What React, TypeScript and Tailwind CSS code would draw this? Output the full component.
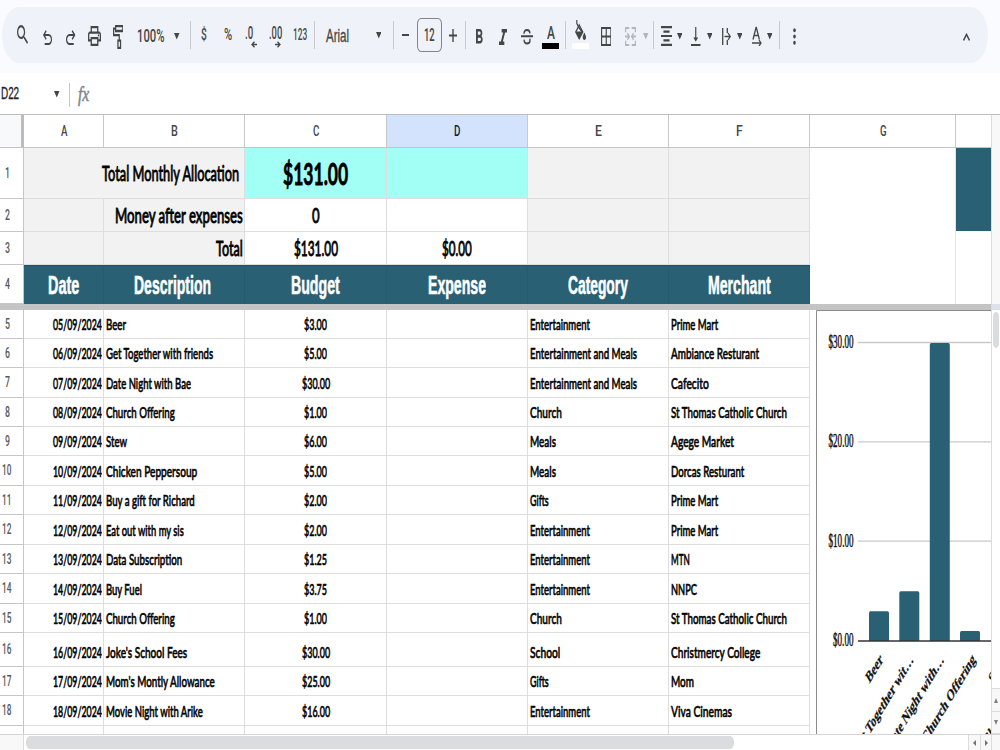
import { useLayoutEffect, useRef, useState, type ReactNode } from "react";
import {
  MdSearch, MdOutlinePrint, MdFormatBold, MdFormatItalic,
  MdBorderAll, MdFormatAlignCenter, MdVerticalAlignBottom,
} from "react-icons/md";

type Row = {
  n: number;
  h: string;
  date: string;
  desc: [string, number];
  amount: string;
  cat: [string, number];
  shop: [string, number];
};

const rows: Row[] = [
  { n: 5, h: "h-[29px]", date: "05/09/2024", desc: ["Beer", 20], amount: "$3.00", cat: ["Entertainment", 60], shop: ["Prime Mart", 47] },
  { n: 6, h: "h-[29px]", date: "06/09/2024", desc: ["Get Together with friends", 107], amount: "$5.00", cat: ["Entertainment and Meals", 107], shop: ["Ambiance Resturant", 88] },
  { n: 7, h: "h-[30px]", date: "07/09/2024", desc: ["Date Night with Bae", 85], amount: "$30.00", cat: ["Entertainment and Meals", 107], shop: ["Cafecito", 38] },
  { n: 8, h: "h-[29px]", date: "08/09/2024", desc: ["Church Offering", 69], amount: "$1.00", cat: ["Church", 32], shop: ["St Thomas Catholic Church", 116] },
  { n: 9, h: "h-[29px]", date: "09/09/2024", desc: ["Stew", 21], amount: "$6.00", cat: ["Meals", 26], shop: ["Agege Market", 63] },
  { n: 10, h: "h-[30px]", date: "10/09/2024", desc: ["Chicken Peppersoup", 91], amount: "$5.00", cat: ["Meals", 26], shop: ["Dorcas Resturant", 73] },
  { n: 11, h: "h-[29px]", date: "11/09/2024", desc: ["Buy a gift for Richard", 89], amount: "$2.00", cat: ["Gifts", 19], shop: ["Prime Mart", 47] },
  { n: 12, h: "h-[30px]", date: "12/09/2024", desc: ["Eat out with my sis", 78], amount: "$2.00", cat: ["Entertainment", 60], shop: ["Prime Mart", 47] },
  { n: 13, h: "h-[29px]", date: "13/09/2024", desc: ["Data Subscription", 76], amount: "$1.25", cat: ["Entertainment", 60], shop: ["MTN", 19] },
  { n: 14, h: "h-[30px]", date: "14/09/2024", desc: ["Buy Fuel", 36], amount: "$3.75", cat: ["Entertainment", 60], shop: ["NNPC", 26] },
  { n: 15, h: "h-[29px]", date: "15/09/2024", desc: ["Church Offering", 69], amount: "$1.00", cat: ["Church", 32], shop: ["St Thomas Catholic Church", 116] },
  { n: 16, h: "h-[34px]", date: "16/09/2024", desc: ["Joke's School Fees", 81], amount: "$30.00", cat: ["School", 30], shop: ["Christmercy College", 89] },
  { n: 17, h: "h-[29px]", date: "17/09/2024", desc: ["Mom's Montly Allowance", 109], amount: "$25.00", cat: ["Gifts", 19], shop: ["Mom", 23] },
  { n: 18, h: "h-[30px]", date: "18/09/2024", desc: ["Movie Night with Arike", 97], amount: "$16.00", cat: ["Entertainment", 60], shop: ["Viva Cinemas", 61] },
];

const columns: [string, string][] = [
  ["A", "w-20"],
  ["B", "w-[141px]"],
  ["C", "w-[142px]"],
  ["D", "w-[141px] bg-[#d3e3fd] text-[#041e49]"],
  ["E", "w-[141px]"],
  ["F", "w-[141px]"],
  ["G", "w-[146px]"],
];

const bars = [
  { x: 869, value: 3 },
  { x: 899.3, value: 5 },
  { x: 929.8, value: 30 },
  { x: 960, value: 1 },
];

const barLabels = [
  { x: 883.5, text: "Beer" },
  { x: 914, text: "Get Together wit…" },
  { x: 944.5, text: "Date Night with…" },
  { x: 976, text: "Church Offering" },
  { x: 1007, text: "Stew" },
  { x: 1039, text: "Chicken Peppe…" },
];

// Condenses a line of text horizontally to the given width
function Fit({ w, className = "", children }: { w: number; className?: string; children: ReactNode }) {
  const ref = useRef<HTMLSpanElement>(null);
  const [scale, setScale] = useState(1);

  useLayoutEffect(() => {
    if (ref.current) setScale(w / ref.current.offsetWidth);
  }, [w, children]);

  return (
    <span className={`inline-flex shrink-0 leading-none whitespace-nowrap ${className}`} style={{ width: w }}>
      <span ref={ref} className="inline-block shrink-0 origin-left" style={{ transform: `scaleX(${scale})` }}>
        {children}
      </span>
    </span>
  );
}

function Caret({ className = "" }: { className?: string }) {
  return (
    <svg viewBox="0 0 10 5" preserveAspectRatio="none" className={`h-[6.5px] w-[5.5px] shrink-0 ${className}`}>
      <path d="M0 0h10L5 5z" fill="currentColor" />
    </svg>
  );
}

function Divider({ className = "" }: { className?: string }) {
  return <div className={`mt-3.5 h-7 w-px shrink-0 bg-[#c7cacd] ${className}`} />;
}

function Toolbar() {
  return (
    <div className="h-[73px] bg-[#f9fbfe] pt-[7px] pl-[2px]">
      <div className="flex h-14 w-[986px] items-start rounded-[17px/28px] bg-[#eff3f9] font-['Roboto',sans-serif] text-[#444746]">
        <MdSearch viewBox="3 3 17.5 17.5" preserveAspectRatio="none" className="mt-[18px] ml-[15px] h-[19px] w-[11px] shrink-0" />
        <svg viewBox="160 -800 640 600" preserveAspectRatio="none" className="mt-[23px] ml-[15px] h-[15px] w-[9px] shrink-0">
          <path fill="currentColor" d="M280-200v-80h284q63 0 109.500-40T720-420q0-60-46.500-100T564-560H312l104 104-56 56-200-200 200-200 56 56-104 104h252q97 0 167 63t70 157q0 94-70 157t-167 63H280Z" />
        </svg>
        <svg viewBox="160 -800 640 600" preserveAspectRatio="none" className="mt-[23px] ml-[14px] h-[15px] w-[9.5px] shrink-0 -scale-x-100">
          <path fill="currentColor" d="M280-200v-80h284q63 0 109.500-40T720-420q0-60-46.500-100T564-560H312l104 104-56 56-200-200 200-200 56 56-104 104h252q97 0 167 63t70 157q0 94-70 157t-167 63H280Z" />
        </svg>
        <MdOutlinePrint viewBox="2 3 20 18" preserveAspectRatio="none" className="mt-[19px] ml-[12.5px] h-5 w-[13px] shrink-0" />
        <svg viewBox="0 0 16 20" preserveAspectRatio="none" className="mt-[18px] ml-[11.5px] h-6 w-[10.5px] shrink-0" fill="none" stroke="currentColor" strokeWidth="1.900">
          <path d="M4 1h11v4H4zM4 3H1v5.500h8.500V13M7.500 13h4v6h-4z" />
        </svg>
        <Fit w={27.5} className="mt-5 ml-[13.5px] text-lg">100%</Fit>
        <Caret className="mt-[26px] ml-[10px]" />
        <Divider className="ml-[10px]" />
        <Fit w={6} className="mt-[19px] ml-[10.5px] text-[17px] font-medium">$</Fit>
        <Fit w={8.5} className="mt-[19px] ml-[16.5px] text-[17px]">%</Fit>
        <div className="mt-[17px] ml-[13px] flex w-3 shrink-0 flex-col">
          <Fit w={8} className="text-[18px] font-medium">.0</Fit>
          <svg viewBox="0 0 6 7" className="-mt-px ml-[6px] h-[7px] w-1.5" fill="none" stroke="currentColor" strokeWidth="1.300">
            <path d="M6 3.500H1M3.500.7L1 3.500l2.500 2.800" />
          </svg>
        </div>
        <div className="mt-[17px] ml-[12px] flex w-3 shrink-0 flex-col">
          <Fit w={13} className="text-[18px] font-medium">.00</Fit>
          <svg viewBox="0 0 6 7" className="-mt-px ml-[6px] h-[7px] w-1.5" fill="none" stroke="currentColor" strokeWidth="1.300">
            <path d="M0 3.500h5M2.500.7L5 3.500 2.500 6.300" />
          </svg>
        </div>
        <Fit w={14} className="mt-5 ml-[11.500px] text-base">123</Fit>
        <Divider className="ml-[7.500px]" />
        <Fit w={23} className="mt-5 ml-[10.5px] font-['Liberation_Sans',sans-serif] text-lg font-normal [-webkit-text-stroke:0.3px]">Arial</Fit>
        <Caret className="mt-[25px] ml-[27px]" />
        <Divider className="ml-[11.500px]" />
        <div className="mt-[27px] ml-[8px] h-[2px] w-[7.500px] shrink-0 bg-[#444746]" />
        <div className="mt-[11px] ml-[7.500px] flex h-[34px] w-[25px] shrink-0 items-center justify-center rounded-[4px/6px] border border-[#80868b]">
          <Fit w={10.5} className="text-lg">12</Fit>
        </div>
        <svg viewBox="0 0 8 13" className="mt-[22px] ml-[7px] h-[13px] w-[8px] shrink-0" stroke="currentColor">
          <path d="M0 6.500h8" strokeWidth="2" />
          <path d="M4 0v13" strokeWidth="1.400" />
        </svg>
        <Divider className="ml-[8px]" />
        <MdFormatBold viewBox="7 4 10.500 14" preserveAspectRatio="none" className="mt-[22px] ml-[10.500px] h-[14.500px] w-[6.500px] shrink-0" />
        <MdFormatItalic viewBox="6 4 12 14" preserveAspectRatio="none" className="mt-[22px] ml-[16px] h-4 w-[8px] shrink-0" />
        <svg viewBox="0 0 18 16" preserveAspectRatio="none" className="mt-[22px] ml-[14px] h-[15.500px] w-[12px] shrink-0" fill="none" stroke="currentColor" strokeWidth="2">
          <path d="M0 7.500h18M4.500 5C4.500 2.500 6.500 1 9 1s4.300 1.300 4.500 3.500M4.500 11c.2 2.500 2 4 4.500 4s4.500-1.300 4.500-3.500c0-.6-.1-1-.3-1.500" />
        </svg>
        <div className="mt-[17px] ml-[9.500px] flex w-[17px] shrink-0 flex-col items-center">
          <Fit w={8} className="text-lg">A</Fit>
          <div className="mt-px h-[6px] w-[17px] bg-black" />
        </div>
        <Divider className="ml-[6px]" />
        <div className="mt-[13px] ml-[6px] flex w-[17px] shrink-0 flex-col items-center">
          <svg viewBox="0 0 17 20" preserveAspectRatio="none" className="h-[20px] w-[11px]">
            <path d="M2.800 0v3.500l3.700 4.500L12 12.500" fill="none" stroke="currentColor" strokeWidth="1.800" />
            <path d="M6.500 5L1.200 12l5.300 6.500L12 12z" fill="none" stroke="currentColor" strokeWidth="1.800" />
            <path d="M1 11.500h11L6.500 19z" fill="currentColor" />
            <path d="M14.500 12.500s2.500 2.800 2.500 4.800-1.100 2.700-2.500 2.700-2.500-1-2.500-2.700 2.500-4.800 2.500-4.800z" fill="currentColor" />
          </svg>
          <div className="mt-[3px] h-[6px] w-[17px] bg-white" />
        </div>
        <MdBorderAll viewBox="3 3 18 18" preserveAspectRatio="none" className="mt-5 ml-[11.500px] h-[19px] w-[10.500px] shrink-0" />
        <svg viewBox="0 0 18 18" preserveAspectRatio="none" className="mt-5 ml-[14px] h-[19px] w-[11px] shrink-0 text-[#b4b7ba]" fill="none" stroke="currentColor" strokeWidth="2">
          <path d="M1 5V1h6M11 1h6v4M1 13v4h6M11 17h6v-4M0 9h6M12 9h6M4 6l3 3-3 3M14 6l-3 3 3 3" />
        </svg>
        <Caret className="mt-[26px] ml-[7px] text-[#b4b7ba]" />
        <Divider className="ml-[4.500px]" />
        <MdFormatAlignCenter viewBox="3 3 18 18" preserveAspectRatio="none" className="mt-[19px] ml-[6.500px] h-5 w-[11px] shrink-0" />
        <Caret className="mt-[26px] ml-[5px]" />
        <MdVerticalAlignBottom viewBox="4 3 16 18" preserveAspectRatio="none" className="mt-5 ml-[9px] h-[19px] w-[9.500px] shrink-0" />
        <Caret className="mt-[26px] ml-[6px]" />
        <svg viewBox="0 0 9 17" className="mt-[21px] ml-[9.500px] h-[17px] w-[9px] shrink-0" fill="none" stroke="currentColor" strokeWidth="1.300">
          <path d="M.7 0v17M5.300 0v5M5.300 12v5M2.500 8.500h6M6 5l2.300 3.500L6 12" />
        </svg>
        <Caret className="mt-[26px] ml-[6px]" />
        <svg viewBox="0 0 10 20" className="mt-[19px] ml-[9.500px] h-5 w-[10px] shrink-0" fill="none" stroke="currentColor" strokeWidth="1.300">
          <path d="M1 13.500L4.200 1l3.200 12.500M2 9.500h4.500M0 17h9M7 14l2 3-2 3" />
        </svg>
        <Caret className="mt-[26px] ml-[5px]" />
        <Divider className="ml-[6.500px]" />
        <svg viewBox="0 0 3 17" className="mt-[21px] ml-[13px] h-[17px] w-[3px] shrink-0" fill="currentColor">
          <ellipse cx="1.500" cy="2.300" rx="1.300" ry="2" />
          <ellipse cx="1.500" cy="8.500" rx="1.300" ry="2" />
          <ellipse cx="1.500" cy="14.700" rx="1.300" ry="2" />
        </svg>
        <svg viewBox="0 0 7 8" className="mt-[26px] ml-[167px] h-2 w-[7px] shrink-0" fill="none" stroke="currentColor" strokeWidth="1.500">
          <path d="M.5 7.500l3-6 3 6" />
        </svg>
      </div>
    </div>
  );
}

function FormulaBar() {
  return (
    <div className="flex h-[41px] items-start bg-white font-['Roboto',sans-serif] text-[#444746]">
      <Fit w={18} className="mt-3 ml-[0.500px] font-['Liberation_Sans',sans-serif] text-[17px] text-[#202124] [-webkit-text-stroke:0.3px]">D22</Fit>
      <Caret className="mt-[18px] ml-[35.500px]" />
      <div className="mt-2.5 ml-[9px] h-6 w-px bg-[#c7cacd]" />
      <Fit w={11} className="mt-[11px] ml-[8px] font-['Liberation_Serif',serif] text-[20px] text-[#80868b] italic [-webkit-text-stroke:0.5px]">fx</Fit>
    </div>
  );
}

function RowNumber({ n, className }: { n: number; className: string }) {
  return (
    <div className={`flex w-6 shrink-0 items-center justify-center border-r border-b border-[#c6c6c6] pr-[9px] pb-px font-['Roboto',sans-serif] text-[14px] [-webkit-text-stroke:0px] text-[#575a5a] ${className}`}>
      <Fit w={n > 9 ? 9.5 : 5}>{n}</Fit>
    </div>
  );
}

function Cell({ className = "", children }: { className?: string; children?: ReactNode }) {
  return <div className={`flex shrink-0 border-r border-b border-[#dedede] ${className}`}>{children}</div>;
}

function FrozenRows() {
  const gray = "bg-[#f2f2f2]";
  const head = "items-center justify-center bg-[#2a6074] border-r-[#265a6d] border-t border-t-[#1f5063] border-b-[#2a6074] font-['Liberation_Sans',sans-serif] text-[26px] font-bold text-white [-webkit-text-stroke:0.6px]";
  return (
    <div className="flex h-[156px]">
      <div className="flex w-[810px] shrink-0 flex-col">
        <div className="flex h-[51px]">
          <RowNumber n={1} className="h-[51px]" />
          <Cell className={`w-[221px] items-center justify-end pr-[5px] pb-px text-[22px] [-webkit-text-stroke:0.8px] ${gray}`}><Fit w={137}>Total Monthly Allocation</Fit></Cell>
          <Cell className="w-[142px] items-center justify-center border-[#93e9e1] bg-[#a2fff6] text-[31px] font-bold [-webkit-text-stroke:0.8px]"><Fit w={65}>$131.00</Fit></Cell>
          <Cell className="w-[141px] border-[#93e9e1] bg-[#a2fff6]" />
          <Cell className={`w-[141px] ${gray}`} />
          <Cell className={`w-[141px] ${gray}`} />
        </div>
        <div className="flex h-[33px] text-[21px] [-webkit-text-stroke:0.8px]">
          <RowNumber n={2} className="h-[33px]" />
          <Cell className={`w-20 ${gray}`} />
          <Cell className={`w-[141px] items-center justify-end pr-px pb-[2px] ${gray}`}><Fit w={128}>Money after expenses</Fit></Cell>
          <Cell className="w-[142px] items-center justify-center pb-[2px]"><Fit w={7.5}>0</Fit></Cell>
          <Cell className="w-[141px]" />
          <Cell className={`w-[141px] ${gray}`} />
          <Cell className={`w-[141px] ${gray}`} />
        </div>
        <div className="flex h-[33px] text-[21px] [-webkit-text-stroke:0.8px]">
          <RowNumber n={3} className="h-[33px]" />
          <Cell className={`w-20 ${gray}`} />
          <Cell className={`w-[141px] items-center justify-end pr-px pb-[2px] ${gray}`}><Fit w={27}>Total</Fit></Cell>
          <Cell className="w-[142px] items-center justify-center pb-[2px]"><Fit w={44}>$131.00</Fit></Cell>
          <Cell className="w-[141px] items-center justify-center pb-[2px]"><Fit w={30}>$0.00</Fit></Cell>
          <Cell className={`w-[141px] ${gray}`} />
          <Cell className={`w-[141px] ${gray}`} />
        </div>
        <div className="flex h-[39px]">
          <RowNumber n={4} className="h-[39px]" />
          <Cell className={`w-20 ${head}`}><Fit w={31}>Date</Fit></Cell>
          <Cell className={`w-[141px] pr-1 ${head}`}><Fit w={77}>Description</Fit></Cell>
          <Cell className={`w-[142px] ${head}`}><Fit w={49}>Budget</Fit></Cell>
          <Cell className={`w-[141px] ${head}`}><Fit w={58}>Expense</Fit></Cell>
          <Cell className={`w-[141px] ${head}`}><Fit w={60}>Category</Fit></Cell>
          <Cell className={`w-[141px] ${head}`}><Fit w={63}>Merchant</Fit></Cell>
        </div>
      </div>
      <div className="w-[146px] border-r border-[#e4e4e4]" />
      <div className="w-[35px]">
        <div className="h-[83px] bg-[#2a6074]" />
      </div>
    </div>
  );
}

function ExpenseChart() {
  const zero = 641;
  const perUnit = 9.93;
  return (
    <svg viewBox="816 310 175 424" className="h-[424px] w-[175px] shrink-0 font-['Liberation_Serif',serif]">
      <path d="M816.500 734V310.500H991" fill="none" stroke="#8c8c8c" />
      {[30, 20, 10].map((v) => (
        <path key={v} d={`M858 ${zero - v * perUnit - 0.6}h133`} stroke="#c9c9c9" strokeWidth="1.300" />
      ))}
      {bars.map((b) => (
        <path
          key={b.x}
          d={`M${b.x} ${zero}v${-b.value * perUnit + 2}q0-2 1.500-2h17q1.500 0 1.500 2V${zero}z`}
          fill="#2a6074"
        />
      ))}
      <path d="M858 641h133" stroke="#333" strokeWidth="1.500" />
      {[30, 20, 10, 0].map((v) => (
        <text
          key={v}
          x={v ? 828.5 : 833}
          y={zero - v * perUnit + 5}
          fontSize="18"
          textLength={v ? 25 : 20.5}
          lengthAdjust="spacingAndGlyphs"
          fill="#111"
          stroke="#111"
          strokeWidth="0.500"
        >
          {`$${v}.00`}
        </text>
      ))}
      {barLabels.map((l) => (
        <text
          key={l.text}
          transform={`translate(${l.x} 660.500) scale(0.600 1) rotate(-45)`}
          textAnchor="end"
          fontSize="16.500"
          fontWeight="bold"
          fill="#111"
          stroke="#111"
          strokeWidth="0.300"
        >
          {l.text}
        </text>
      ))}
    </svg>
  );
}

function DataRows() {
  return (
    <div className="flex w-[810px] shrink-0 flex-col [-webkit-text-stroke:0.6px]">
      {rows.map((r) => (
        <div key={r.n} className={`flex shrink-0 text-base ${r.h}`}>
          <RowNumber n={r.n} className={r.h} />
          <Cell className="w-20 items-end justify-end pr-[1.500px] pb-[6px]"><Fit w={49}>{r.date}</Fit></Cell>
          <Cell className="w-[141px] items-end pb-[6px] pl-[2px]"><Fit w={r.desc[1]}>{r.desc[0]}</Fit></Cell>
          <Cell className="w-[142px] items-end justify-center pb-[6px]"><Fit w={r.amount.length > 5 ? 28 : 23}>{r.amount}</Fit></Cell>
          <Cell className="w-[141px]" />
          <Cell className="w-[141px] items-end pb-[6px] pl-[1.500px]"><Fit w={r.cat[1]}>{r.cat[0]}</Fit></Cell>
          <Cell className="w-[141px] items-end pb-[6px] pl-[2px]"><Fit w={r.shop[1]}>{r.shop[0]}</Fit></Cell>
        </div>
      ))}
      <div className="flex h-2 shrink-0">
        <div className="w-6 border-r border-[#c6c6c6]" />
        <Cell className="w-20 border-b-0" />
        <Cell className="w-[141px] border-b-0" />
        <Cell className="w-[142px] border-b-0" />
        <Cell className="w-[141px] border-b-0" />
        <Cell className="w-[141px] border-b-0" />
        <Cell className="w-[141px] border-b-0" />
      </div>
    </div>
  );
}

function VerticalScrollbar() {
  return (
    <div className="flex w-[9px] shrink-0 flex-col border-l border-[#dcdcdc] bg-white">
      <div className="h-[189px] bg-[#f8f8f8]" />
      <div className="h-[6px] bg-[#dde1ea]" />
      <div className="mt-[2px] ml-px h-9 w-[6px] rounded-[3px/5px] bg-[#dadce0]" />
      <div className="mt-auto flex h-[23px] items-center justify-center border-t border-[#dcdcdc] bg-[#f8f8f8] text-[#808080]">
        <svg viewBox="0 0 4 5" className="h-[5px] w-1"><path d="M0 5h4L2 0z" fill="currentColor" /></svg>
      </div>
      <div className="flex h-[23px] items-center justify-center border-y border-[#dcdcdc] bg-[#f8f8f8] text-[#808080]">
        <svg viewBox="0 0 4 5" className="h-[5px] w-1"><path d="M0 0h4L2 5z" fill="currentColor" /></svg>
      </div>
    </div>
  );
}

function HorizontalScrollbar() {
  return (
    <div className="flex h-4 border-t border-[#d5d5d5] bg-white">
      <div className="w-6 shrink-0 border-r border-[#dcdcdc] bg-[#f8f8f8]" />
      <div className="mt-px ml-[2px] h-[13px] w-[708px] rounded-[4px/6px] bg-[#dadce0]" />
      <div className="ml-auto flex w-3 items-center justify-center border-l border-[#dcdcdc] bg-[#f8f8f8]">
        <svg viewBox="0 0 3 6" className="h-[6px] w-[3px]"><path d="M3 0v6L0 3z" fill="#707070" /></svg>
      </div>
      <div className="flex w-3 items-center justify-center border-x border-[#dcdcdc] bg-[#f8f8f8]">
        <svg viewBox="0 0 3 6" className="h-[6px] w-[3px]"><path d="M0 0v6l3-3z" fill="#707070" /></svg>
      </div>
      <div className="w-2 bg-[#f8f8f8]" />
    </div>
  );
}

export default function App() {
  return (
    <div className="h-[750px] w-[1000px] overflow-hidden bg-white font-['Lato',sans-serif] font-medium text-black">
      <Toolbar />
      <FormulaBar />
      <div className="flex h-[620px] border-t border-[#bdbdbd]">
        <div className="w-[991px] shrink-0 overflow-hidden">
          {/* Column letters */}
          <div className="flex h-[33px] border-b border-[#c4c4c4] font-['Roboto',sans-serif] text-[15px] text-[#444746]">
            <div className="w-6 shrink-0 border-r-[3px] border-[#bcbcbc] bg-[#f8f9fa]" />
            {columns.map(([name, cls]) => (
              <div key={name} className={`flex shrink-0 items-center justify-center border-r border-[#c9c9c9] pt-px pl-px ${cls}`}>
                <Fit w={6.5}>{name}</Fit>
              </div>
            ))}
          </div>
          <FrozenRows />
          <div className="h-[6px] bg-[#c4c4c4]" />
          <div className="flex h-[424px]">
            <DataRows />
            <div className="w-[6px] shrink-0" />
            <ExpenseChart />
          </div>
        </div>
        <VerticalScrollbar />
      </div>
      <HorizontalScrollbar />
    </div>
  );
}
